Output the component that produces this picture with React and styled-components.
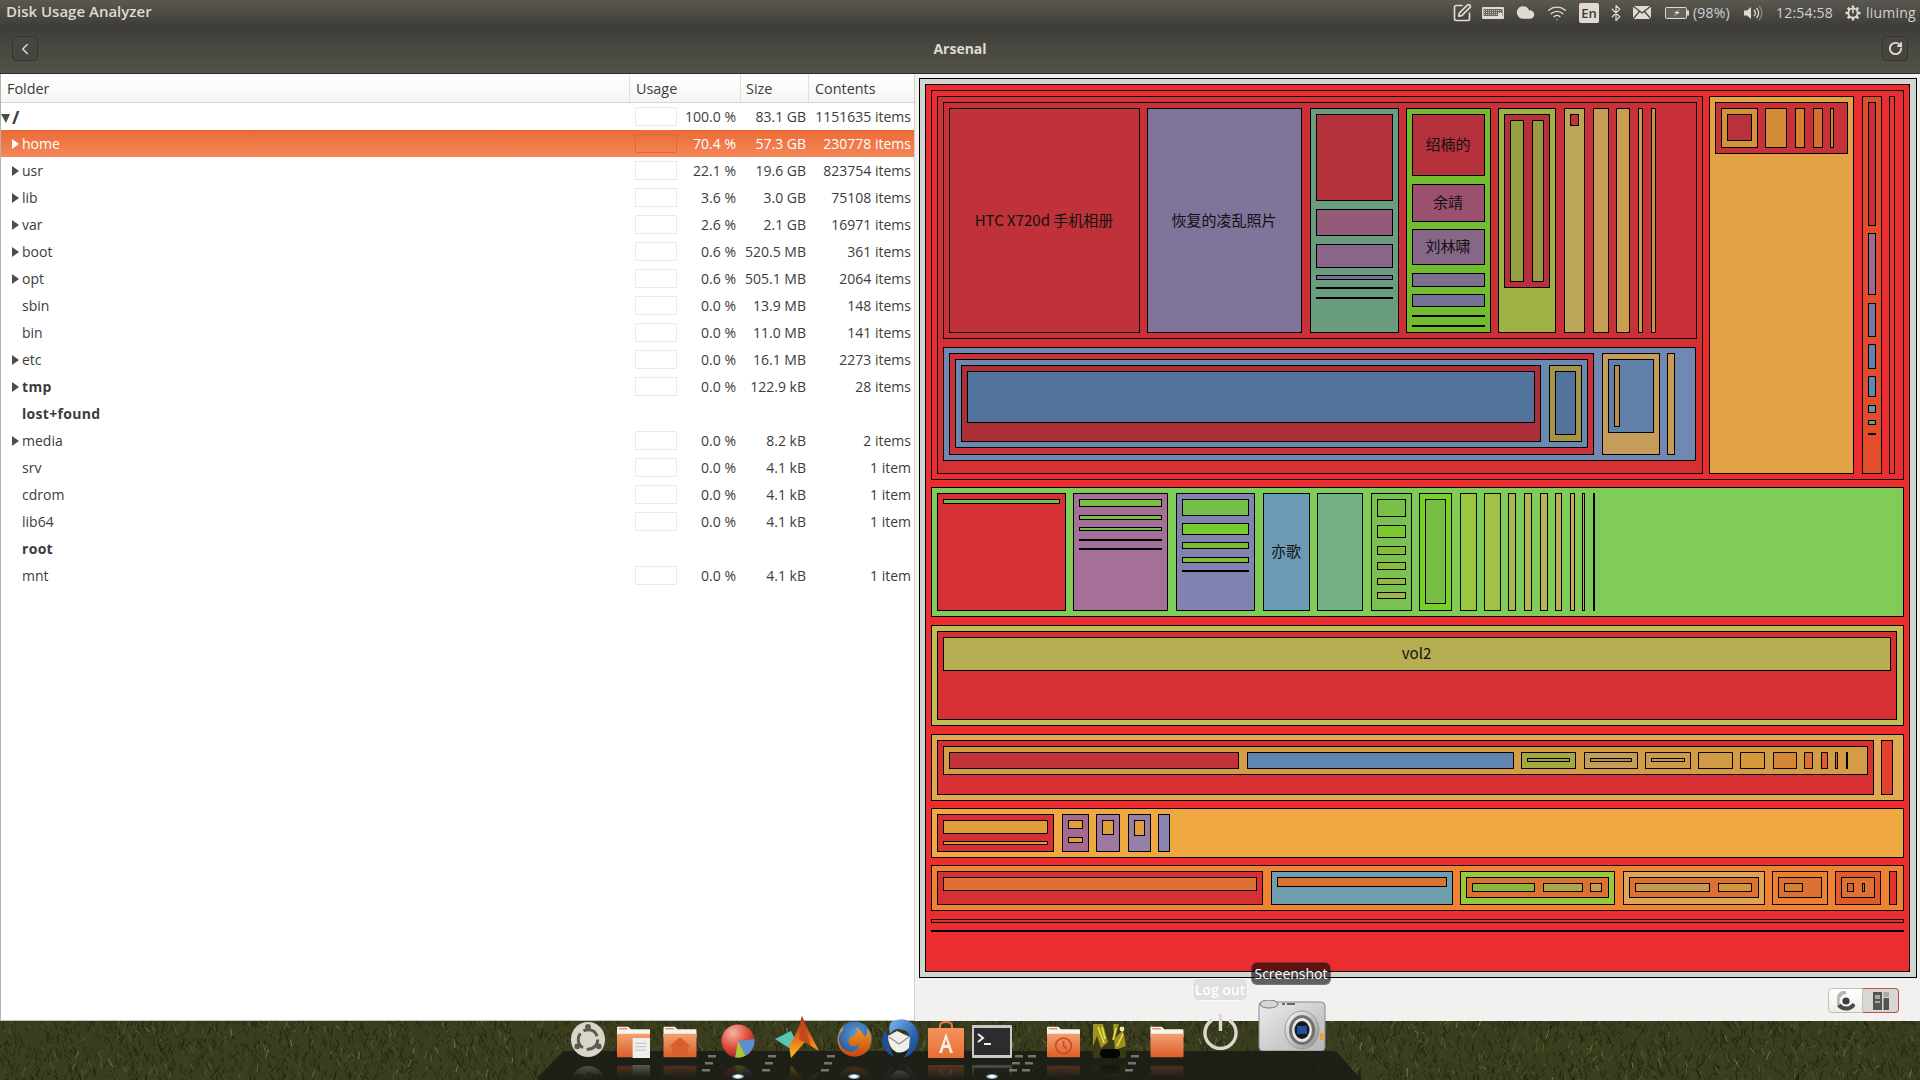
import React from "react";
import styled, { createGlobalStyle } from "styled-components";
import { ChevronLeft, Cloud, RotateCw, SquarePen, Wifi, Bluetooth } from "lucide-react";

const rows = [
  { name: "/", pct: "100.0 %", size: "83.1 GB", items: "1151635 items", open: true, root: true },
  { name: "home", pct: "70.4 %", size: "57.3 GB", items: "230778 items", arrow: true, selected: true },
  { name: "usr", pct: "22.1 %", size: "19.6 GB", items: "823754 items", arrow: true },
  { name: "lib", pct: "3.6 %", size: "3.0 GB", items: "75108 items", arrow: true },
  { name: "var", pct: "2.6 %", size: "2.1 GB", items: "16971 items", arrow: true },
  { name: "boot", pct: "0.6 %", size: "520.5 MB", items: "361 items", arrow: true },
  { name: "opt", pct: "0.6 %", size: "505.1 MB", items: "2064 items", arrow: true },
  { name: "sbin", pct: "0.0 %", size: "13.9 MB", items: "148 items" },
  { name: "bin", pct: "0.0 %", size: "11.0 MB", items: "141 items" },
  { name: "etc", pct: "0.0 %", size: "16.1 MB", items: "2273 items", arrow: true },
  { name: "tmp", pct: "0.0 %", size: "122.9 kB", items: "28 items", arrow: true, bold: true },
  { name: "lost+found", bold: true },
  { name: "media", pct: "0.0 %", size: "8.2 kB", items: "2 items", arrow: true },
  { name: "srv", pct: "0.0 %", size: "4.1 kB", items: "1 item" },
  { name: "cdrom", pct: "0.0 %", size: "4.1 kB", items: "1 item" },
  { name: "lib64", pct: "0.0 %", size: "4.1 kB", items: "1 item" },
  { name: "root", bold: true },
  { name: "mnt", pct: "0.0 %", size: "4.1 kB", items: "1 item" },
];

// treemap boxes, painted in order: left, top, right, bottom, fill, label
const cells = [
  [919, 78, 1916, 977, "#d3d5d0"],
  [925, 84, 1909, 971, "#ec2e30"],
  [931, 90, 1903, 479, "#ea2d31"],
  [937, 96, 1702, 473, "#d62f34"],
  [943, 102, 1696, 338, "#c83138"],
  [949, 108, 1139, 332, "#bf3239", "HTC X720d 手机相册"],
  [1147, 108, 1301, 332, "#80749b", "恢复的凌乱照片"],
  [1310, 108, 1398, 332, "#6a9d7f"],
  [1316, 114, 1392, 200, "#b5323d"],
  [1316, 209, 1392, 235, "#925c79"],
  [1316, 244, 1392, 267, "#876687"],
  [1316, 275, 1392, 279, "#7e6f90"],
  [1406, 108, 1490, 332, "#72bd2f"],
  [1412, 114, 1484, 175, "#b5323d", "绍楠的"],
  [1412, 184, 1484, 221, "#9c506f", "余靖"],
  [1412, 229, 1484, 264, "#876687", "刘林啸"],
  [1412, 273, 1484, 286, "#7e6f90"],
  [1412, 294, 1484, 306, "#757195"],
  [1498, 108, 1555, 332, "#9db243"],
  [1504, 114, 1549, 287, "#b5323d"],
  [1510, 120, 1523, 281, "#95a03f"],
  [1532, 120, 1543, 281, "#9c9a45"],
  [1564, 108, 1584, 332, "#bca658"],
  [1570, 114, 1578, 125, "#c2343c"],
  [1593, 108, 1608, 332, "#c79e57"],
  [1616, 108, 1629, 332, "#c99e50"],
  [1638, 108, 1642, 332, "#cb9c47"],
  [1651, 108, 1655, 332, "#c8943f"],
  [943, 347, 1695, 460, "#7088b2"],
  [949, 353, 1593, 454, "#c83238"],
  [955, 359, 1587, 447, "#6b88b0"],
  [961, 365, 1540, 441, "#ac2e38"],
  [967, 371, 1534, 422, "#52749c"],
  [1549, 365, 1581, 441, "#a39447"],
  [1555, 371, 1575, 434, "#52749c"],
  [1602, 353, 1659, 454, "#c69c5b"],
  [1608, 359, 1653, 432, "#607fa9"],
  [1614, 365, 1619, 426, "#b88f48"],
  [1667, 353, 1674, 454, "#c89c50"],
  [1709, 96, 1853, 473, "#e3a243"],
  [1715, 102, 1847, 153, "#c73138"],
  [1721, 108, 1757, 147, "#d39238"],
  [1727, 114, 1751, 140, "#b7323c"],
  [1765, 108, 1786, 147, "#d48a36"],
  [1795, 108, 1804, 147, "#d67f33"],
  [1813, 108, 1822, 147, "#d46f30"],
  [1830, 108, 1833, 147, "#d6802f"],
  [1862, 96, 1881, 473, "#e34d2b"],
  [1868, 102, 1875, 225, "#c7303a"],
  [1868, 233, 1875, 294, "#9a6d99"],
  [1868, 303, 1875, 336, "#7978a0"],
  [1868, 344, 1875, 368, "#6780aa"],
  [1868, 376, 1875, 396, "#5f86b8"],
  [1868, 405, 1875, 412, "#5d9aa0"],
  [1868, 420, 1875, 424, "#5e9e8e"],
  [1889, 96, 1894, 473, "#e5372f"],

  [931, 487, 1903, 616, "#80cc58"],
  [937, 493, 1065, 610, "#d63035"],
  [943, 499, 1059, 503, "#76bf48"],
  [1073, 493, 1167, 610, "#a57097"],
  [1079, 499, 1161, 506, "#7ac143"],
  [1079, 515, 1161, 519, "#7ac143"],
  [1079, 527, 1161, 530, "#7ac143"],
  [1176, 493, 1254, 610, "#8182b0"],
  [1182, 499, 1248, 515, "#76bf48"],
  [1182, 523, 1248, 534, "#7acb2c"],
  [1182, 542, 1248, 548, "#7abd33"],
  [1182, 557, 1248, 562, "#80bb36"],
  [1263, 493, 1309, 610, "#6c9ab5", "亦歌"],
  [1317, 493, 1362, 610, "#72af85"],
  [1371, 493, 1411, 610, "#7bc053"],
  [1377, 499, 1405, 516, "#7abf47"],
  [1377, 525, 1405, 537, "#78c92f"],
  [1377, 546, 1405, 554, "#85bc34"],
  [1377, 562, 1405, 569, "#8dbb39"],
  [1377, 578, 1405, 584, "#96b740"],
  [1377, 592, 1405, 598, "#9fb548"],
  [1419, 493, 1451, 610, "#78d028"],
  [1425, 499, 1445, 603, "#76be44"],
  [1460, 493, 1476, 610, "#99c83e"],
  [1484, 493, 1500, 610, "#a2c148"],
  [1508, 493, 1515, 610, "#a9ba50"],
  [1524, 493, 1531, 610, "#b4b654"],
  [1540, 493, 1547, 610, "#bdb459"],
  [1555, 493, 1561, 610, "#c2ad5b"],
  [1570, 493, 1574, 610, "#c9a95d"],
  [1582, 493, 1584, 610, "#d1a060"],

  [931, 625, 1903, 725, "#c0bd55"],
  [937, 631, 1896, 719, "#d63035"],
  [943, 637, 1890, 670, "#b6ae52", "vol2"],

  [931, 734, 1903, 800, "#e2a955"],
  [937, 740, 1873, 794, "#d63035"],
  [943, 746, 1867, 774, "#d59c47"],
  [949, 752, 1238, 768, "#c23238"],
  [1247, 752, 1513, 768, "#6185b1"],
  [1521, 752, 1575, 768, "#a3a840"],
  [1527, 758, 1569, 761, "#96a33e"],
  [1584, 752, 1637, 768, "#c39c59"],
  [1590, 758, 1631, 761, "#b8913f"],
  [1645, 752, 1690, 768, "#cc9b4d"],
  [1651, 758, 1684, 761, "#c79543"],
  [1698, 752, 1732, 768, "#d19a45"],
  [1740, 752, 1764, 768, "#d6963a"],
  [1773, 752, 1796, 768, "#d58635"],
  [1804, 752, 1812, 768, "#d97132"],
  [1821, 752, 1827, 768, "#dc5c2c"],
  [1835, 752, 1837, 768, "#e05f2a"],
  [1881, 740, 1892, 794, "#e0402c"],

  [931, 808, 1903, 857, "#f0a942"],
  [937, 814, 1053, 851, "#d63035"],
  [943, 820, 1047, 833, "#e09d3c"],
  [943, 841, 1047, 844, "#e09d3c"],
  [1062, 814, 1088, 851, "#a56a90"],
  [1068, 820, 1082, 828, "#e29d3c"],
  [1068, 837, 1082, 842, "#e29d3c"],
  [1096, 814, 1119, 851, "#a077a2"],
  [1102, 820, 1113, 834, "#e29d3c"],
  [1128, 814, 1150, 851, "#9680a8"],
  [1134, 820, 1144, 835, "#e29d3c"],
  [1158, 814, 1169, 851, "#8a84b0"],

  [931, 865, 1903, 910, "#ef8333"],
  [937, 871, 1262, 904, "#d63035"],
  [943, 877, 1256, 890, "#dd7033"],
  [1271, 871, 1452, 904, "#6f9eae"],
  [1277, 877, 1446, 886, "#dd7033"],
  [1460, 871, 1614, 904, "#98c93c"],
  [1466, 877, 1608, 897, "#dd7033"],
  [1472, 883, 1534, 891, "#8eb43a"],
  [1543, 883, 1582, 891, "#aea84a"],
  [1590, 883, 1601, 891, "#c89b4e"],
  [1623, 871, 1764, 904, "#dfa555"],
  [1629, 877, 1758, 897, "#dd7033"],
  [1635, 883, 1709, 891, "#c99a4d"],
  [1718, 883, 1751, 891, "#d69638"],
  [1772, 871, 1827, 904, "#ea8030"],
  [1778, 877, 1821, 897, "#dd7033"],
  [1784, 883, 1802, 891, "#d88032"],
  [1835, 871, 1880, 904, "#e25a2c"],
  [1841, 877, 1874, 897, "#dd7033"],
  [1847, 883, 1853, 891, "#e0602b"],
  [1862, 883, 1864, 891, "#d96e30"],
  [1889, 871, 1896, 904, "#e3352b"],
  [931, 919, 1903, 922, "#e13030"],
];

// boxes too thin to have an inside: left, top, width, height
const slivers = [
  [1316, 287, 77, 2], [1316, 297, 77, 2],
  [1412, 315, 73, 2], [1412, 325, 73, 2],
  [1868, 433, 8, 2],
  [1079, 539, 83, 2], [1079, 548, 83, 2],
  [1182, 570, 67, 2],
  [1593, 493, 2, 118],
  [1846, 752, 2, 17],
  [931, 930, 973, 2],
];

function seeded(seed) {
  let s = seed;
  return () => {
    s = (s * 16807) % 2147483647;
    return s / 2147483647;
  };
}

const grassColors = ["#1c1d0c", "#2a2c13", "#474a24", "#666a36", "#8a8c50"];
const grassPaths = (() => {
  const rnd = seeded(4711);
  const out = grassColors.map(() => "");
  for (let i = 0; i < 6000; i++) {
    const x = Math.round(rnd() * 1920);
    const y = Math.round(rnd() * 64);
    const len = 2 + rnd() * 7;
    const lean = (rnd() - 0.5) * 10;
    const r = rnd();
    const k = r < 0.4 ? 0 : r < 0.72 ? 1 : r < 0.92 ? 2 : r < 0.99 ? 3 : 4;
    out[k] += `M${x} ${y}l${lean.toFixed(1)} ${(-len).toFixed(1)}`;
  }
  return out;
})();

const GlobalStyle = createGlobalStyle`
  html, body {
    margin: 0;
    padding: 0;
    background: #3a3d1e;
  }
  * {
    box-sizing: border-box;
  }
`;

const Screen = styled.div`
  position: relative;
  width: 1920px;
  height: 1080px;
  overflow: hidden;
  display: flex;
  flex-direction: column;
  font-family: "Open Sans", "Noto Sans", "Noto Sans CJK SC", sans-serif;
  font-size: 14px;
  color: #3c3c3c;
`;

const TopPanel = styled.div`
  height: 25px;
  flex: none;
  display: flex;
  align-items: center;
  justify-content: space-between;
  padding-left: 6px;
  background: linear-gradient(#5a5850, #3f3e39);
  color: #dfdbd2;
`;

const AppName = styled.div`
  font-weight: 600;
  font-size: 15px;
  margin-top: -3px;
`;

const Indicators = styled.div`
  display: flex;
  align-items: center;
  height: 25px;
`;

const Slot = styled.div`
  width: ${(p) => p.$w}px;
  height: 25px;
  display: flex;
  align-items: center;
  font-size: 14px;
  letter-spacing: 0.2px;
  color: #cfd3d2;
  white-space: nowrap;
`;

const LangBox = styled.div`
  width: 20px;
  height: 20px;
  border-radius: 2px;
  background: #dfdbd2;
  color: #3c3b37;
  font-size: 13px;
  font-weight: 600;
  letter-spacing: 0;
  display: flex;
  align-items: center;
  justify-content: center;
`;

const BluetoothGlyph = styled(Bluetooth)`
  margin-left: -4px;
`;

const Toolbar = styled.div`
  height: 49px;
  flex: none;
  display: flex;
  align-items: center;
  justify-content: space-between;
  padding: 0 12px 1px;
  background: linear-gradient(#3d3c37, #54534a);
  border-bottom: 1px solid #2c2b28;
`;

const Title = styled.div`
  color: #dfdbd2;
  font-weight: 700;
  font-size: 14px;
  margin-top: -1px;
`;

const ToolButton = styled.div`
  width: 26px;
  height: 25px;
  border: 1px solid #35342f;
  border-radius: 4px;
  background: #46453f;
  display: flex;
  align-items: center;
  justify-content: center;
  color: #dfdbd2;
`;

const Main = styled.div`
  height: 947px;
  flex: none;
  display: flex;
  background: #f2f1f0;
`;

const TreePanel = styled.div`
  width: 915px;
  flex: none;
  background: #fff;
  border-left: 1px solid #b4b3ae;
  border-right: 1px solid #cfcec9;
  border-bottom: 1px solid #c4c3be;
`;

const columns = "grid-template-columns: 628px 111px 68px 106px;";

const HeaderRow = styled.div`
  display: grid;
  ${columns}
  height: 29px;
  font-size: 14.4px;
  border-bottom: 1px solid #d6d5d0;
  background: linear-gradient(#fff, #f6f5f4);
`;

const HeaderCell = styled.div`
  display: flex;
  align-items: center;
  padding-left: ${(p) => p.$pad}px;
  border-left: ${(p) => (p.$first ? "none" : "1px solid #e2e1dd")};
`;

const Row = styled.div`
  display: grid;
  ${columns}
  height: 27px;
  align-items: center;
  color: ${(p) => (p.$selected ? "#fff" : "#3c3c3c")};
  background: ${(p) => (p.$selected ? "linear-gradient(#ea6a35, #f6875a)" : "transparent")};
`;

const NameCell = styled.div`
  position: relative;
  padding-left: ${(p) => (p.$root ? 11 : 21)}px;
  font-weight: ${(p) => (p.$bold ? 700 : 400)};
  font-size: ${(p) => (p.$root ? 18 : 14)}px;
  letter-spacing: ${(p) => (p.$bold && !p.$root ? 0.3 : 0)}px;
`;

const Expander = styled.span`
  position: absolute;
  width: 0;
  height: 0;
  ${(p) =>
    p.$open
      ? `left: 0; top: 9px; border-left: 5px solid transparent; border-right: 4px solid transparent; border-top: 9px solid #4c4c4c;`
      : `left: 11px; top: 5px; border-top: 5.5px solid transparent; border-bottom: 5.5px solid transparent; border-left: 7px solid ${
          p.$light ? "#fff" : "#4c4c4c"
        };`}
`;

const UsageCell = styled.div`
  display: flex;
  align-items: center;
  padding: 0 4px 0 6px;
`;

const UsageBox = styled.div`
  width: 42px;
  height: 19px;
  border: 1px solid ${(p) => (p.$selected ? "#e0683a" : "#ebebe9")};
  background: ${(p) => (p.$selected ? "transparent" : "#fff")};
`;

const Pct = styled.div`
  margin-left: auto;
`;

const NumCell = styled.div`
  text-align: right;
  padding-right: ${(p) => p.$pad}px;
  white-space: nowrap;
`;

const ChartPane = styled.div`
  flex: 1;
  display: flex;
  flex-direction: column;
  padding: 4px 3px 0 4px;
`;

const TreemapSvg = styled.svg`
  display: block;
  flex: none;
`;

const Cell = styled.rect`
  stroke: #000;
  stroke-width: 1;
  shape-rendering: crispEdges;
`;

const CellLabel = styled.text`
  font-family: "Noto Sans CJK SC", "Open Sans", sans-serif;
  font-size: 15px;
  fill: #111;
  text-anchor: middle;
  dominant-baseline: central;
`;

const ModeBar = styled.div`
  display: flex;
  justify-content: flex-end;
  margin-top: 10px;
  padding-right: 18px;
`;

const ModeButton = styled.div`
  width: ${(p) => (p.$active ? 36 : 35)}px;
  height: 25px;
  display: flex;
  align-items: center;
  justify-content: center;
  border: 1px solid ${(p) => (p.$active ? "#b5563a" : "#c0bfba")};
  border-left: ${(p) => (p.$active ? "none" : "1px solid #c0bfba")};
  border-radius: ${(p) => (p.$active ? "0 4px 4px 0" : "4px 0 0 4px")};
  background: ${(p) => (p.$active ? "#d8d7d3" : "linear-gradient(#fff, #eeedeb)")};
`;

const Dock = styled.div`
  position: relative;
  height: 59px;
  flex: none;
  background: #3a3d1e;
`;

const Backdrop = styled.svg`
  position: absolute;
  left: 0;
  top: 0;
  display: block;
`;

const DockRow = styled.div`
  position: relative;
  display: flex;
  align-items: flex-end;
  height: 37px;
  padding-left: 570px;
`;

const DockIcon = styled.div`
  flex: none;
  width: ${(p) => p.$w}px;
  height: ${(p) => p.$h}px;
  margin-left: ${(p) => p.$ml}px;
  margin-bottom: ${(p) => p.$lift || 0}px;
  ${(p) =>
    p.$lift
      ? ""
      : "-webkit-box-reflect: below 7px linear-gradient(transparent 62%, rgba(255, 255, 255, 0.28));"}

  svg {
    display: block;
    width: 100%;
    height: 100%;
  }
`;

const RunDot = styled.div`
  position: absolute;
  left: ${(p) => p.$x - 6}px;
  top: 53px;
  width: 12px;
  height: 5px;
  border-radius: 50%;
  background: radial-gradient(#fff 30%, rgba(150, 210, 255, 0.7) 60%, transparent 100%);
`;

const Tip = styled.div`
  position: absolute;
  display: flex;
  align-items: center;
  justify-content: center;
  border-radius: 6px;
  font-size: 14px;
  color: #fff;
  white-space: nowrap;
`;

const ScreenshotTip = styled(Tip)`
  left: 1251px;
  top: 962px;
  width: 80px;
  height: 23px;
  background: rgba(0, 0, 0, 0.6);
  border: 1px solid rgba(255, 255, 255, 0.15);
`;

const LogoutTip = styled(Tip)`
  left: 1192px;
  top: 978px;
  width: 56px;
  height: 23px;
  font-weight: 600;
  background: #e0e0de;
  border: 1px solid #f8f8f7;
`;

const Keyboard = () => (
  <svg width="22" height="12" viewBox="0 0 22 12">
    <rect width="22" height="12" rx="1" fill="#dfdbd2" />
    <rect x="1.5" y="2" width="19" height="7" fill="#66655e" />
    <path d="M2 3.5h18M2 5.5h18M2 7.5h13" stroke="#c8c5bc" strokeWidth="1" strokeDasharray="1 1" />
    <rect x="16" y="6" width="4" height="3" fill="#dfdbd2" />
  </svg>
);

const MailIcon = () => (
  <svg width="18" height="13" viewBox="0 0 18 13">
    <rect width="18" height="13" fill="#dfdbd2" />
    <path d="M0 0l9 7 9-7M0 13l6.5-7.5M18 13l-6.5-7.5" stroke="#3f3e39" strokeWidth="1.2" fill="none" />
  </svg>
);

const BatteryIcon = () => (
  <svg width="24" height="12" viewBox="0 0 24 12">
    <rect x="0.5" y="0.5" width="21" height="11" rx="1" fill="#65645c" stroke="#dfdbd2" />
    <rect x="22" y="3.5" width="2" height="5" fill="#dfdbd2" />
    <path d="M15 2.5l-6 3.6h3.2L8 9.5l7-4.2h-3.4z" fill="#fff" />
  </svg>
);

const VolumeIcon = () => (
  <svg width="20" height="16" viewBox="0 0 20 16">
    <path d="M1 5.5h3L8 2v12L4 10.5H1z" fill="#dfdbd2" />
    <path d="M11 5a4 4 0 0 1 0 6M13.5 3a7 7 0 0 1 0 10" stroke="#dfdbd2" strokeWidth="1.3" fill="none" />
    <path d="M16 1a10 10 0 0 1 0 14" stroke="#8c8a82" strokeWidth="1.3" fill="none" />
  </svg>
);

const GearIcon = () => (
  <svg width="16" height="16" viewBox="0 0 16 16">
    <g stroke="#dfdbd2" strokeWidth="2.4">
      <path d="M8 .5v3M8 12.5v3M.5 8h3M12.5 8h3M2.7 2.7l2.1 2.1M11.2 11.2l2.1 2.1M13.3 2.7l-2.1 2.1M4.8 11.2l-2.1 2.1" />
    </g>
    <circle cx="8" cy="8" r="4.6" fill="#46453f" stroke="#dfdbd2" strokeWidth="1.8" />
    <path d="M8 3.2v5" stroke="#dfdbd2" strokeWidth="1.6" />
  </svg>
);

const RingIcon = () => (
  <svg width="18" height="20" viewBox="0 0 18 20">
    <path d="M9 1a9 9 0 0 0-6 15" stroke="#b9b8b4" strokeWidth="4" fill="none" />
    <path d="M2 14a9 9 0 0 0 15-1" stroke="#4a4a48" strokeWidth="4" fill="none" />
    <circle cx="9" cy="10" r="3.6" fill="#3f3f3d" />
  </svg>
);

const BlocksIcon = () => (
  <svg width="16" height="18" viewBox="0 0 16 18">
    <rect width="9" height="18" fill="#55554f" />
    <rect x="2" y="3" width="5" height="4" fill="#a9a8a3" />
    <rect x="2" y="9" width="5" height="2" fill="#a9a8a3" />
    <rect x="10.5" width="5.5" height="5" fill="#a9a8a3" />
    <rect x="10.5" y="6" width="5.5" height="12" fill="#55554f" />
  </svg>
);

const FolderShape = ({ id, children }) => (
  <svg viewBox="0 0 40 38">
    <defs>
      <linearGradient id={id} x1="0" y1="0" x2="0" y2="1">
        <stop offset="0" stopColor="#f4a071" />
        <stop offset="1" stopColor="#dc5e2a" />
      </linearGradient>
    </defs>
    <path d="M1 3q0-1 1-1h12l3 3h21q1 0 1 1v8H1z" fill="#f5f4ef" />
    <rect x="3" y="3.5" width="10" height="1.6" fill="#ef8a55" />
    <rect x="1" y="10" width="38" height="27" rx="1" fill={`url(#${id})`} />
    {children}
  </svg>
);

const UbuntuIcon = () => (
  <svg viewBox="0 0 36 38">
    <ellipse cx="18" cy="19" rx="17.5" ry="18" fill="#d8d5cb" />
    <circle cx="18" cy="19" r="10" fill="none" stroke="#5b5a4c" strokeWidth="3" strokeDasharray="17 4" />
    <circle cx="18" cy="6" r="3" fill="#5b5a4c" />
    <circle cx="7" cy="26" r="3" fill="#5b5a4c" />
    <circle cx="29" cy="26" r="3" fill="#5b5a4c" />
  </svg>
);

const PieIcon = () => (
  <svg viewBox="0 0 36 36">
    <defs>
      <radialGradient id="pieRed" cx="0.35" cy="0.25" r="0.85">
        <stop offset="0" stopColor="#f6b3a2" />
        <stop offset="0.55" stopColor="#dd4a3a" />
        <stop offset="1" stopColor="#8e1a1c" />
      </radialGradient>
    </defs>
    <circle cx="18" cy="18" r="17.5" fill="url(#pieRed)" />
    <path d="M18 18L35.5 16A17.5 17.5 0 0 1 26 33.5z" fill="#5b8fd0" />
    <path d="M18 18l-3 17.5a18 18 0 0 0 11 -2z" fill="#a8c93c" />
  </svg>
);

const MatlabIcon = () => (
  <svg viewBox="0 0 44 42">
    <defs>
      <linearGradient id="mlPeak" x1="0" y1="0" x2="0" y2="1">
        <stop offset="0" stopColor="#7a2a10" />
        <stop offset="0.55" stopColor="#e8701c" />
        <stop offset="1" stopColor="#f8c61e" />
      </linearGradient>
    </defs>
    <path d="M0 23l16-8 6 12-8 5z" fill="#58c4b4" />
    <path d="M27 0Q33 14 44 35L36 30 30 26 16 42 14 30Q22 18 27 0z" fill="url(#mlPeak)" />
    <path d="M27 0L24 24l6 2 6 4Q31 14 27 0z" fill="#c8471a" />
  </svg>
);

const FirefoxIcon = () => (
  <svg viewBox="0 0 40 38">
    <defs>
      <radialGradient id="ffGlobe" cx="0.55" cy="0.35" r="0.7">
        <stop offset="0" stopColor="#5d9ad6" />
        <stop offset="1" stopColor="#1f4f92" />
      </radialGradient>
      <linearGradient id="ffFox" x1="0" y1="0" x2="0" y2="1">
        <stop offset="0" stopColor="#f4a21d" />
        <stop offset="1" stopColor="#c9440f" />
      </linearGradient>
    </defs>
    <circle cx="20" cy="19" r="18" fill="url(#ffGlobe)" />
    <path d="M8 6Q2 14 3 22q2 14 17 15 15-1 17-15 1-8-4-14 1 8-3 9-2-7-9-10 3 5 0 8-5 1-7 5-1 4 3 6 6 1 8-3 0 8-8 9-12-1-13-13 0-6 4-9z" fill="url(#ffFox)" />
  </svg>
);

const ThunderbirdIcon = () => (
  <svg viewBox="0 0 38 40">
    <defs>
      <linearGradient id="tbWing" x1="0" y1="0" x2="1" y2="1">
        <stop offset="0" stopColor="#7ab8ee" />
        <stop offset="0.6" stopColor="#2a67b4" />
        <stop offset="1" stopColor="#123a74" />
      </linearGradient>
    </defs>
    <path d="M10 4Q24-3 34 8q6 10 2 20-4 9-14 12 6-6 7-16Q30 12 18 11q-6 0-9 5-2-7 1-12z" fill="url(#tbWing)" />
    <path d="M4 12Q-2 24 4 32q4 5 9 6-6-8-6-20z" fill="#1d4f92" />
    <path d="M7 18l9-5 13 6-1 11q-6 6-13 4-8-5-8-16z" fill="#eeeeea" />
    <path d="M8 19l10 7 10-7" fill="none" stroke="#8c8c88" strokeWidth="1.2" />
  </svg>
);

const BagIcon = () => (
  <svg viewBox="0 0 38 37">
    <defs>
      <linearGradient id="bagFill" x1="0" y1="0" x2="0" y2="1">
        <stop offset="0" stopColor="#f4935c" />
        <stop offset="1" stopColor="#e76f35" />
      </linearGradient>
    </defs>
    <path d="M13 9V5q0-4 6-4t6 4v4" fill="none" stroke="#e9773d" strokeWidth="2" />
    <rect x="1" y="7" width="36" height="30" rx="1" fill="url(#bagFill)" />
    <path d="M19 12l-7 20h3l1.5-5h5l1.5 5h3zM17.4 24l1.6-6 1.6 6z" fill="#f8efe6" fillRule="evenodd" />
  </svg>
);

const TerminalIcon = () => (
  <svg viewBox="0 0 40 33">
    <rect width="40" height="33" rx="1" fill="#c9c9c5" />
    <rect x="2" y="3" width="36" height="27" fill="#2b2c2e" />
    <path d="M6 9l5 4-5 4" fill="none" stroke="#eee" strokeWidth="2" />
    <path d="M12 19h7" stroke="#eee" strokeWidth="2" />
  </svg>
);

const FlameIcon = () => (
  <svg viewBox="0 0 33 34">
    <rect width="33" height="34" fill="#3a3a14" />
    <path d="M0 0h10l5 18-7 6-4-12-4 10zM20 0h6l-4 14 8-8 3 16-11 4z" fill="#9c9222" />
    <path d="M5 3l6 16M9 3l3 12M23 4l-3 12M30 10l-6 12" stroke="#f0e04a" strokeWidth="1.6" />
    <rect x="7" y="25" width="20" height="9" rx="4" fill="#050502" />
    <circle cx="29" cy="5" r="2.4" fill="#f2e6c0" />
  </svg>
);

const PowerIcon = () => (
  <svg viewBox="0 0 35 37">
    <path d="M9 7a15.5 15.5 0 1 0 17 0" fill="none" stroke="#dcd9cf" strokeWidth="3.4" />
    <path d="M17.5 1v17" stroke="#dcd9cf" strokeWidth="3.4" />
  </svg>
);

const CameraIcon = () => (
  <svg viewBox="0 0 68 51">
    <defs>
      <linearGradient id="camBody" x1="0" y1="0" x2="1" y2="1">
        <stop offset="0" stopColor="#ececec" />
        <stop offset="1" stopColor="#b4b4b4" />
      </linearGradient>
      <linearGradient id="camRing" x1="0" y1="0" x2="1" y2="1">
        <stop offset="0" stopColor="#fafafa" />
        <stop offset="1" stopColor="#8c8c8c" />
      </linearGradient>
    </defs>
    <rect x="1" y="2" width="66" height="49" rx="4" fill="url(#camBody)" stroke="#8a8a8a" />
    <ellipse cx="11" cy="4" rx="9" ry="4" fill="#d6d6d6" stroke="#777" />
    <path d="M24 4h3M29 4h8" stroke="#666" strokeWidth="2" />
    <ellipse cx="44" cy="30" rx="17" ry="19" fill="url(#camRing)" stroke="#999" />
    <ellipse cx="44" cy="30" rx="13" ry="15" fill="#6f6f6f" />
    <ellipse cx="44" cy="30" rx="10" ry="12" fill="#e4e4e4" />
    <ellipse cx="44" cy="30" rx="7.5" ry="9" fill="#16181e" />
    <rect x="39" y="26" width="10" height="8" fill="#254f96" />
    <rect x="62" y="33" width="3.5" height="7" fill="#e8a23c" />
  </svg>
);

const dockApps = [
  { w: 36, h: 37, ml: 0, icon: <UbuntuIcon /> },
  { w: 39, h: 33, ml: 8, icon: <FolderShape id="fdDocs"><rect x="19" y="15" width="20" height="23" fill="#efefeb" /><path d="M22 21h13M22 25h13M22 29h13" stroke="#bbb" /></FolderShape> },
  { w: 40, h: 33, ml: 7, icon: <FolderShape id="fdHome"><path d="M20 14L7 25h4v10h18V25h4z" fill="#d8602e" /></FolderShape> },
  { w: 36, h: 34, ml: 20, icon: <PieIcon /> },
  { w: 44, h: 42, ml: 19, icon: <MatlabIcon /> },
  { w: 39, h: 38, ml: 16, icon: <FirefoxIcon /> },
  { w: 38, h: 40, ml: 7, icon: <ThunderbirdIcon /> },
  { w: 38, h: 37, ml: 8, icon: <BagIcon /> },
  { w: 40, h: 33, ml: 7, icon: <TerminalIcon /> },
  { w: 39, h: 33, ml: 32, icon: <FolderShape id="fdTime"><circle cx="20" cy="24" r="9" fill="none" stroke="#c94f20" strokeWidth="2" /><path d="M20 18v6l4 3" stroke="#c94f20" strokeWidth="2" fill="none" /></FolderShape> },
  { w: 33, h: 34, ml: 10, icon: <FlameIcon /> },
  { w: 40, h: 33, ml: 21, icon: <FolderShape id="fdPlain" /> },
  { w: 35, h: 37, ml: 16, lift: 8, icon: <PowerIcon /> },
  { w: 68, h: 51, ml: 20, lift: 7, icon: <CameraIcon /> },
];

// small grey dashes on the shelf between launcher groups, x at top row
const shelfDashes = [188, 248, 307, 495, 508, 611];

const App = () => {
  return (
    <Screen>
      <GlobalStyle />
      <TopPanel>
        <AppName>Disk Usage Analyzer</AppName>
        <Indicators>
          <Slot $w={30}><SquarePen size={20} strokeWidth={2} color="#dfdbd2" /></Slot>
          <Slot $w={34}><Keyboard /></Slot>
          <Slot $w={31}><Cloud size={19} fill="#dfdbd2" color="#dfdbd2" /></Slot>
          <Slot $w={32}><Wifi size={20} strokeWidth={1.6} color="#dfdbd2" /></Slot>
          <Slot $w={32}><LangBox>En</LangBox></Slot>
          <Slot $w={22}><BluetoothGlyph size={18} strokeWidth={1.6} color="#dfdbd2" /></Slot>
          <Slot $w={32}><MailIcon /></Slot>
          <Slot $w={28}><BatteryIcon /></Slot>
          <Slot $w={50}>(98%)</Slot>
          <Slot $w={33}><VolumeIcon /></Slot>
          <Slot $w={69}>12:54:58</Slot>
          <Slot $w={21}><GearIcon /></Slot>
          <Slot $w={54}>liuming</Slot>
        </Indicators>
      </TopPanel>

      <Toolbar>
        <ToolButton><ChevronLeft size={18} /></ToolButton>
        <Title>Arsenal</Title>
        <ToolButton><RotateCw size={15} strokeWidth={3} /></ToolButton>
      </Toolbar>

      <Main>
        <TreePanel>
          <HeaderRow>
            <HeaderCell $first $pad={6}>Folder</HeaderCell>
            <HeaderCell $pad={6}>Usage</HeaderCell>
            <HeaderCell $pad={5}>Size</HeaderCell>
            <HeaderCell $pad={6}>Contents</HeaderCell>
          </HeaderRow>
          {rows.map((r) => (
            <Row key={r.name} $selected={r.selected}>
              <NameCell $bold={r.bold || r.root} $root={r.root}>
                {(r.arrow || r.open) && <Expander $open={r.open} $light={r.selected} />}
                {r.name}
              </NameCell>
              <UsageCell>
                {r.pct && <UsageBox $selected={r.selected} />}
                <Pct>{r.pct}</Pct>
              </UsageCell>
              <NumCell $pad={2}>{r.size}</NumCell>
              <NumCell $pad={3}>{r.items}</NumCell>
            </Row>
          ))}
        </TreePanel>

        <ChartPane>
          <TreemapSvg width="998" height="900" viewBox="919 78 998 900">
            {cells.map(([l, t, r, b, fill], i) => (
              <Cell key={i} x={l + 0.5} y={t + 0.5} width={r - l} height={b - t} fill={fill} />
            ))}
            {slivers.map(([x, y, w, h], i) => (
              <rect key={i} x={x} y={y} width={w} height={h} fill="#000" />
            ))}
            {cells
              .filter((c) => c[5])
              .map(([l, t, r, b, , label]) => (
                <CellLabel key={label} x={(l + r) / 2} y={(t + b) / 2 - 1}>
                  {label}
                </CellLabel>
              ))}
          </TreemapSvg>
          <ModeBar>
            <ModeButton><RingIcon /></ModeButton>
            <ModeButton $active><BlocksIcon /></ModeButton>
          </ModeBar>
        </ChartPane>
      </Main>

      <Dock>
        <Backdrop width="1920" height="59" viewBox="0 0 1920 59">
          {grassPaths.map((d, i) => (
            <path key={i} d={d} stroke={grassColors[i]} strokeWidth="1" fill="none" opacity="0.7" />
          ))}
          <g transform="translate(520 -1)">
            <path d="M47 31H812q5 0 9 6L840 58q3 2 -4 2H22q-6 0 -4 -3L38 37q4 -6 9 -6z" fill="#1c1d17" opacity="0.93" />
            {shelfDashes.map((x, i) => (
              <g key={i} fill="#75756c">
                <rect x={x} y="35" width="8" height="2.5" />
                <rect x={x - 3} y="42" width="8" height="2.5" />
                <rect x={x - 6} y="49" width="8" height="2.5" />
              </g>
            ))}
          </g>
        </Backdrop>
        <DockRow>
          {dockApps.map((a, i) => (
            <DockIcon key={i} $w={a.w} $h={a.h} $ml={a.ml} $lift={a.lift}>
              {a.icon}
            </DockIcon>
          ))}
        </DockRow>
        <RunDot $x={738} />
        <RunDot $x={854} />
        <RunDot $x={992} />
      </Dock>

      <LogoutTip>Log out</LogoutTip>
      <ScreenshotTip>Screenshot</ScreenshotTip>
    </Screen>
  );
};

export default App;
